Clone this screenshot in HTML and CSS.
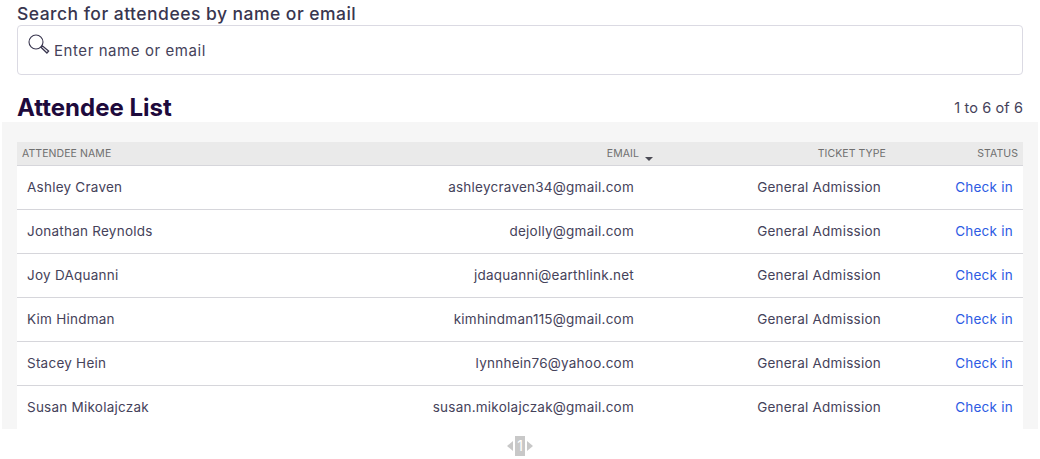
FILE: index.html
```html
<!DOCTYPE html>
<html lang="en">
<head>
    <meta charset="UTF-8">
    <meta name="viewport" content="width=device-width, initial-scale=1.0">
    <title>Attendee List</title>
    <link rel="stylesheet" href="styles.css">
</head>
<body>
    <section class="search">
        <label class="search-label" for="search-input">Search for attendees by name or email</label>
        <div class="search-box">
            <svg class="search-icon" width="22" height="22" viewBox="0 0 22 22" fill="none">
                <circle cx="8" cy="8" r="7" stroke="#39364f" stroke-width="1.1"/>
                <path d="M13 13.2l1.6-1.2 6 5-1.7 2z" fill="#fff" stroke="#39364f" stroke-width="1.3"/>
            </svg>
            <input id="search-input" class="search-input" type="text" placeholder="Enter name or email">
        </div>
    </section>
    <div class="list-head">
        <h1>Attendee List</h1>
        <span class="list-count">1 to 6 of 6</span>
    </div>
    <div class="panel">
        <table class="attendees">
            <thead>
                <tr>
                    <th class="col-name">Attendee Name</th>
                    <th class="col-email">Email <span class="sort-arrow"></span></th>
                    <th class="col-ticket">Ticket Type</th>
                    <th class="col-status">Status</th>
                </tr>
            </thead>
            <tbody>
                <tr>
                    <td class="col-name">Ashley Craven</td>
                    <td class="col-email">ashleycraven34@gmail.com</td>
                    <td class="col-ticket">General Admission</td>
                    <td class="col-status"><a href="#">Check in</a></td>
                </tr>
                <tr>
                    <td class="col-name">Jonathan Reynolds</td>
                    <td class="col-email">dejolly@gmail.com</td>
                    <td class="col-ticket">General Admission</td>
                    <td class="col-status"><a href="#">Check in</a></td>
                </tr>
                <tr>
                    <td class="col-name">Joy DAquanni</td>
                    <td class="col-email">jdaquanni@earthlink.net</td>
                    <td class="col-ticket">General Admission</td>
                    <td class="col-status"><a href="#">Check in</a></td>
                </tr>
                <tr>
                    <td class="col-name">Kim Hindman</td>
                    <td class="col-email">kimhindman115@gmail.com</td>
                    <td class="col-ticket">General Admission</td>
                    <td class="col-status"><a href="#">Check in</a></td>
                </tr>
                <tr>
                    <td class="col-name">Stacey Hein</td>
                    <td class="col-email">lynnhein76@yahoo.com</td>
                    <td class="col-ticket">General Admission</td>
                    <td class="col-status"><a href="#">Check in</a></td>
                </tr>
                <tr>
                    <td class="col-name">Susan Mikolajczak</td>
                    <td class="col-email">susan.mikolajczak@gmail.com</td>
                    <td class="col-ticket">General Admission</td>
                    <td class="col-status"><a href="#">Check in</a></td>
                </tr>
            </tbody>
        </table>
    </div>
    <div class="pager">
        <span class="pager-prev"></span>
        <span class="pager-page">1</span>
        <span class="pager-next"></span>
    </div>
</body>
</html>
```

FILE: styles.css
```css
* {
    box-sizing: border-box;
}

html, body {
    height: 459px;
    overflow: hidden;
}

body {
    margin: 0;
    padding: 0;
    background-color: #fff;
    color: #39364f;
    font-family: Inter, "Noto Sans", sans-serif;
}

.search {
    padding: 3px 17px 0;
}

.search-label {
    display: block;
    height: 22px;
    font-size: 17.5px;
    line-height: 22px;
    font-weight: 500;
    letter-spacing: 0.47px;
}

.search-box {
    display: flex;
    height: 50px;
    padding: 8px 10px 0;
    border: 1px solid #dbdae3;
    border-radius: 4px;
}

.search-icon {
    flex: none;
}

.search-input {
    flex: 1;
    height: 32px;
    margin-left: 4px;
    padding: 0;
    border: 0;
    outline: 0;
    font-family: inherit;
    font-size: 15px;
    letter-spacing: 0.57px;
    color: #45425a;
}

.search-input::placeholder {
    color: #45425a;
    opacity: 1;
}

.list-head {
    display: flex;
    justify-content: space-between;
    align-items: flex-end;
    height: 47px;
    padding: 0 17px 0;
}

.list-head h1 {
    margin: 0;
    font-size: 24px;
    line-height: 29px;
    font-weight: 700;
    color: #1e0a3c;
}

.list-count {
    font-size: 14.5px;
    line-height: 29px;
    letter-spacing: 0.1px;
    color: #45425a;
}

.panel {
    height: 307px;
    margin: 0 2px;
    padding: 20px 15px 0;
    overflow: hidden;
    background-color: #f6f6f6;
}

.attendees {
    width: 100%;
    border-collapse: collapse;
    table-layout: fixed;
    background-color: #fff;
}

.attendees th {
    height: 23px;
    padding: 1px 5px 0;
    border-bottom: 1px solid #d6d6db;
    background-color: #eaeaea;
    font-size: 10.5px;
    font-weight: 400;
    letter-spacing: 0.08px;
    text-transform: uppercase;
    color: #6f6f6f;
}

.attendees td {
    height: 44px;
    padding: 0 10px;
    border-bottom: 1px solid #d6d6db;
    font-size: 13.5px;
    letter-spacing: 0.24px;
    white-space: nowrap;
    color: #45425a;
}

.col-name {
    width: 300px;
    text-align: left;
}

.col-email {
    width: 327px;
    text-align: right;
}

th.col-email {
    padding-right: 3px;
}

.col-ticket {
    width: 247px;
    text-align: right;
}

.col-status {
    text-align: right;
}

.col-status a {
    color: #2d5be3;
    text-decoration: none;
}

.sort-arrow {
    display: inline-block;
    width: 0;
    height: 0;
    margin: 0 -12px 0 3px;
    border-top: 4px solid #4b4b55;
    border-left: 4px solid transparent;
    border-right: 4px solid transparent;
    vertical-align: -4px;
}

.pager {
    display: flex;
    justify-content: center;
    align-items: center;
    gap: 2px;
    height: 34px;
}

.pager-page {
    width: 10px;
    height: 20px;
    background-color: #c8c8c8;
    color: #fff;
    font-size: 14px;
    line-height: 20px;
    text-align: center;
}

.pager-prev, .pager-next {
    width: 0;
    height: 0;
    border-top: 5px solid transparent;
    border-bottom: 5px solid transparent;
}

.pager-prev {
    border-right: 6px solid #c8c8c8;
}

.pager-next {
    border-left: 6px solid #c8c8c8;
}
```
